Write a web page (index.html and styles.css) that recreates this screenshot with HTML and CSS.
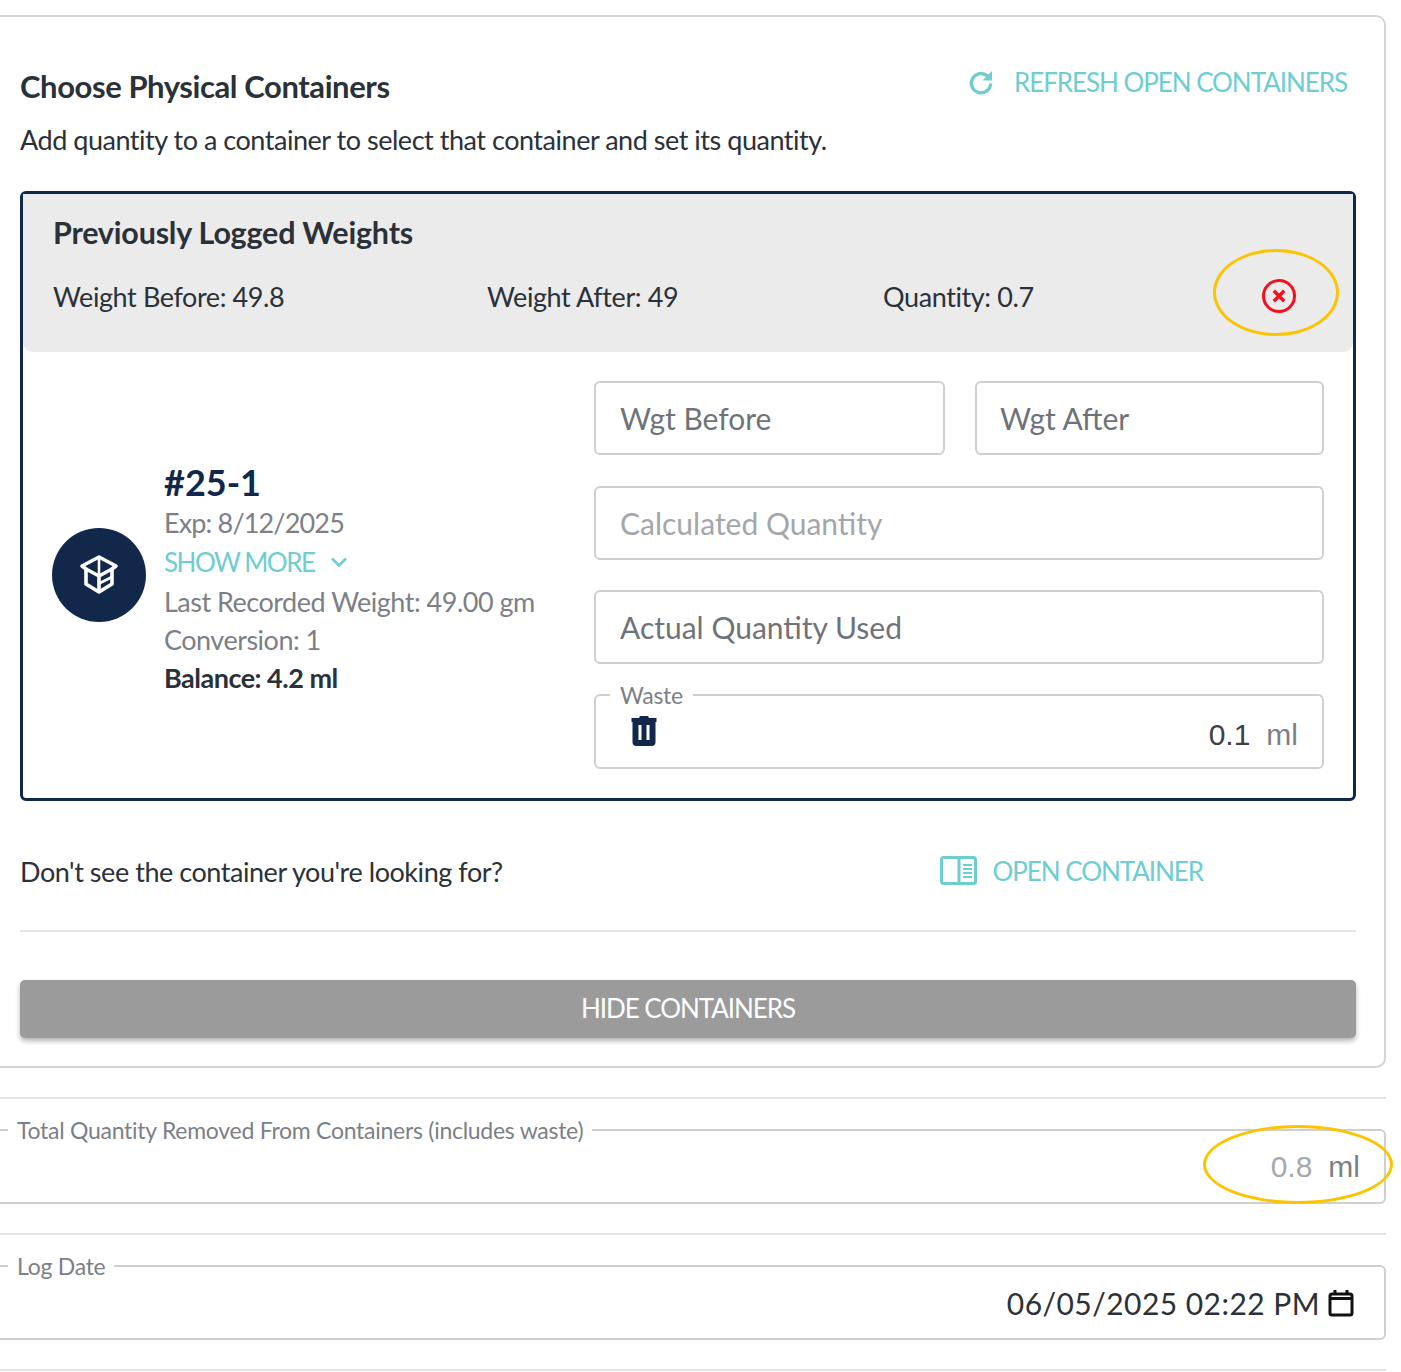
FILE: index.html
```html
<!DOCTYPE html>
<html lang="en">

<head>
    <meta charset="UTF-8">
    <meta name="viewport" content="width=device-width, initial-scale=1.0">
    <title>Choose Physical Containers</title>
    <link rel="stylesheet" href="styles.css">
</head>

<body>
    <div class="page">
        <section class="panel">
            <div class="panel-head">
                <h2>Choose Physical Containers</h2>
                <a class="link refresh" href="#">
                    <svg width="26" height="26" viewBox="0 0 26 26" fill="none">
                        <path d="M20.5 8.2A9.6 9.6 0 1 0 22.6 14.5" stroke="#6ecdcf" stroke-width="3.4"/>
                        <path d="M24 2V11.5H14.5Z" fill="#6ecdcf"/>
                    </svg>
                    REFRESH OPEN CONTAINERS
                </a>
            </div>
            <p class="hint">Add quantity to a container to select that container and set its quantity.</p>

            <div class="card">
                <div class="logged">
                    <h3>Previously Logged Weights</h3>
                    <div class="logged-row">
                        <span class="w-before">Weight Before: 49.8</span>
                        <span class="w-after">Weight After: 49</span>
                        <span class="w-qty">Quantity: 0.7</span>
                        <svg class="remove" width="36" height="36" viewBox="0 0 36 36" fill="none">
                            <circle cx="18" cy="18" r="15.5" stroke="#f4101f" stroke-width="3"/>
                            <path d="M12.8 12.8L23.2 23.2M23.2 12.8L12.8 23.2" stroke="#f4101f" stroke-width="3.4"/>
                        </svg>
                    </div>
                    <span class="ring ring-remove"></span>
                </div>

                <div class="card-body">
                    <div class="info">
                        <div class="avatar">
                            <svg width="44" height="44" viewBox="0 0 44 44" fill="none" stroke="#fff" stroke-width="3.6" stroke-linejoin="round">
                                <path d="M22 4L39 13L35 16V31L22 39L9 31V16L5 13Z"/>
                                <path d="M9 16L22 23L35 16M22 23V39"/>
                                <path d="M22 4V23M22 30.5L35 24" stroke-width="2.6"/>
                            </svg>
                        </div>
                        <div class="details">
                            <div class="lot">#25-1</div>
                            <div class="line exp">Exp: 8/12/2025</div>
                            <a class="link show-more" href="#">SHOW MORE
                                <svg width="18" height="12" viewBox="0 0 18 12" fill="none">
                                    <path d="M2 2.5L9 9.5L16 2.5" stroke="#6ecdcf" stroke-width="2.6"/>
                                </svg>
                            </a>
                            <div class="line">Last Recorded Weight: 49.00 gm</div>
                            <div class="line">Conversion: 1</div>
                            <div class="line balance">Balance: 4.2 ml</div>
                        </div>
                    </div>

                    <div class="fields">
                        <div class="field-row">
                            <input class="field dark" type="text" placeholder="Wgt Before">
                            <input class="field dark short" type="text" placeholder="Wgt After">
                        </div>
                        <input class="field" type="text" placeholder="Calculated Quantity">
                        <input class="field dark" type="text" placeholder="Actual Quantity Used">
                        <fieldset class="waste">
                            <legend>Waste</legend>
                            <svg class="trash" width="26" height="30" viewBox="0 0 26 30">
                                <path d="M9 0H17L18 2H25.5V6H0.5V2H8Z" fill="#12284b"/>
                                <path fill-rule="evenodd" d="M1.5 5H24.5V26Q24.5 30 20.5 30H5.5Q1.5 30 1.5 26ZM7.5 9V24H10.5V9ZM15.5 9V24H18.5V9Z" fill="#12284b"/>
                            </svg>
                            <span class="value waste-value">0.1</span>
                            <span class="unit waste-value">ml</span>
                        </fieldset>
                    </div>
                </div>
            </div>

            <div class="open-row">
                <p>Don't see the container you're looking for?</p>
                <a class="link open" href="#">
                    <svg width="37" height="29" viewBox="0 0 37 29" fill="none" stroke="#6ecdcf">
                        <rect x="1.5" y="1.5" width="34" height="26" rx="2" stroke-width="3"/>
                        <path d="M19 1.5V27.5" stroke-width="3"/>
                        <path d="M23 9H32M23 13H32M23 17H32M23 21H32" stroke-width="1.8"/>
                    </svg>
                    OPEN CONTAINER
                </a>
            </div>
            <button class="hide-btn">HIDE CONTAINERS</button>
        </section>

        <div class="outer-field first">
            <fieldset class="wide">
                <legend>Total Quantity Removed From Containers (includes waste)</legend>
                <span class="value muted">0.8</span>
                <span class="unit">ml</span>
            </fieldset>
            <span class="ring ring-total"></span>
        </div>

        <div class="outer-field">
            <fieldset class="wide date">
                <legend>Log Date</legend>
                <span class="date-text">06/05/2025 02:22 PM</span>
                <svg width="26" height="28" viewBox="0 0 26 28" fill="none">
                    <rect x="2" y="5" width="22" height="21" rx="2" stroke="#111" stroke-width="3"/>
                    <path d="M2 8H24V11H2Z" fill="#111"/>
                    <path d="M7 1V6M19 1V6" stroke="#111" stroke-width="3"/>
                </svg>
            </fieldset>
        </div>
        <div class="end-line"></div>
    </div>
</body>

</html>
```

FILE: styles.css
```css
* {
    box-sizing: border-box;
}

body {
    margin: 0;
    background: #fff;
    font-family: "Lato", sans-serif;
    color: #2b3138;
    overflow-x: hidden;
}

.page {
    padding-top: 15px;
    width: 1401px;
    height: 1372px;
    overflow: hidden;
}

.panel {
    margin-left: -10px;
    width: 1396px;
    height: 1053px;
    padding: 0 28px;
    border: 2px solid #d4d4d4;
    border-radius: 10px;
}

.panel-head {
    display: flex;
    justify-content: space-between;
    align-items: flex-start;
    padding-top: 47px;
    height: 96px;
}

h2 {
    margin: 3px 0 0;
    font-size: 31px;
    line-height: 38px;
    font-weight: 700;
    letter-spacing: -0.42px;
    color: #2b3138;
}

.link {
    color: #6ecdcf;
    text-decoration: none;
    font-size: 26px;
    letter-spacing: -1.05px;
}

.refresh {
    display: flex;
    align-items: center;
    gap: 20px;
    margin-right: 9px;
    line-height: 36px;
}

.hint {
    margin: 9px 0 0;
    font-size: 27px;
    line-height: 36px;
    letter-spacing: -0.47px;
}

.card {
    margin-top: 33px;
    width: 1336px;
    height: 610px;
    border: 3px solid #12284b;
    border-radius: 6px;
}

.logged {
    position: relative;
    height: 158px;
    padding: 19px 30px 0;
    background: #ebebeb;
    border-radius: 0 0 10px 10px;
}

h3 {
    margin: 0;
    font-size: 30.5px;
    line-height: 38px;
    font-weight: 700;
    letter-spacing: -0.2px;
}

.logged-row {
    display: flex;
    align-items: center;
    margin-top: 27px;
    height: 36px;
    font-size: 27px;
    letter-spacing: -0.4px;
}

.w-before {
    width: 434px;
}

.w-after {
    width: 396px;
}

.w-qty {
    width: 378px;
}

.ring {
    position: absolute;
    border: 3px solid #fcc400;
    border-radius: 50%;
}

.ring-remove {
    left: 1190px;
    top: 55px;
    width: 126px;
    height: 87px;
}

.card-body {
    display: flex;
    padding: 29px 0 0 29px;
}

.info {
    display: flex;
    align-items: center;
    width: 542px;
    height: 388px;
}

.avatar {
    display: flex;
    align-items: center;
    justify-content: center;
    flex: none;
    width: 94px;
    height: 94px;
    margin-right: 18px;
    border-radius: 50%;
    background: #12284b;
}

.details {
    padding-top: 7px;
}

.lot {
    font-size: 36px;
    line-height: 43px;
    font-weight: 700;
    color: #12284b;
}

.line {
    font-size: 27px;
    line-height: 38px;
    letter-spacing: -0.5px;
    color: #7c7f86;
}

.line.exp {
    letter-spacing: -0.85px;
}

.show-more {
    display: flex;
    align-items: center;
    gap: 16px;
    line-height: 41px;
    letter-spacing: -1.5px;
}

.balance {
    font-weight: 700;
    color: #2b3138;
}

.fields {
    display: flex;
    flex-direction: column;
    gap: 30.5px;
    width: 730px;
}

.field-row {
    display: flex;
    gap: 30px;
}

.field {
    width: 100%;
    height: 74px;
    padding: 0 24px;
    border: 2px solid #cfcfcf;
    border-radius: 6px;
    font-family: "Lato", sans-serif;
    font-size: 30px;
    background: #fff;
    outline: none;
}

.field-row .field {
    width: 351px;
}

.field-row .short {
    width: 349px;
    padding-left: 23px;
}

.field::placeholder {
    color: #a3a6aa;
    opacity: 1;
}

.field.dark::placeholder {
    color: #6f7379;
}

fieldset {
    margin: 0;
    min-width: 0;
    border: 2px solid #cfcfcf;
    border-radius: 6px;
}

legend {
    color: #7c7f86;
    font-size: 23px;
    line-height: 28px;
    letter-spacing: -0.27px;
}

.waste {
    display: flex;
    align-items: flex-start;
    height: 88px;
    padding: 7px 24px 0 0;
    margin-top: -14px;
}

.waste legend {
    margin-left: 14px;
    padding: 0 10px;
}

.trash {
    margin-left: 35px;
    margin-right: auto;
}

.value {
    font-family: "Liberation Sans", sans-serif;
    font-size: 30px;
    color: #3c4148;
}

.value.muted {
    color: #a6a8ac;
}

.unit {
    margin-left: 16px;
    font-family: "Liberation Sans", sans-serif;
    font-size: 30px;
    color: #7c7f86;
}

.waste-value {
    margin-top: 2px;
}

.open-row {
    display: flex;
    align-items: center;
    justify-content: space-between;
    width: 1336px;
    height: 131px;
    padding: 12px 153px 0 0;
    border-bottom: 2px solid #e4e4e4;
}

.open-row p {
    margin: 0;
    font-size: 27px;
    letter-spacing: -0.45px;
}

.open {
    display: flex;
    align-items: center;
    gap: 16px;
    margin-top: -2px;
}

.hide-btn {
    display: block;
    width: 1336px;
    height: 58px;
    margin-top: 48px;
    padding: 0 0 2px;
    border: 0;
    border-radius: 5px;
    background: #9b9b9b;
    color: #fff;
    font-family: "Lato", sans-serif;
    font-size: 26px;
    letter-spacing: -1.05px;
    box-shadow: 0 3px 5px rgba(0, 0, 0, 0.3);
}

.outer-field {
    position: relative;
    margin-left: -10px;
    width: 1396px;
    height: 136px;
    padding-top: 17px;
    border-top: 2px solid #e4e4e4;
}

.outer-field.first {
    margin-top: 29px;
}

.wide {
    display: flex;
    align-items: center;
    justify-content: flex-end;
    height: 88px;
    padding: 0 24px 12px 0;
}

.wide legend {
    margin-left: 16px;
    padding: 0 9px;
}

.date {
    padding-right: 30px;
    padding-bottom: 12px;
}

.date-text {
    margin-right: 8px;
    font-size: 30px;
    letter-spacing: 0.45px;
    color: #2b3138;
}

.ring-total {
    left: 1213px;
    top: 26px;
    width: 190px;
    height: 79px;
}

.end-line {
    margin-left: -10px;
    width: 1396px;
    border-top: 2px solid #e4e4e4;
}
```
